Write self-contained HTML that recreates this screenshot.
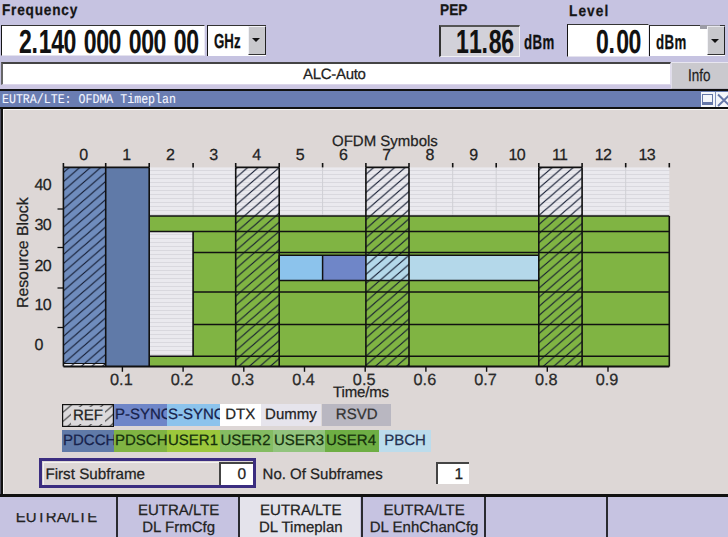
<!DOCTYPE html><html><head><meta charset="utf-8"><style>
html,body{margin:0;padding:0}
body{width:728px;height:537px;overflow:hidden;position:relative;background:#c6c3e1;font-family:"Liberation Sans",sans-serif;text-rendering:geometricPrecision;-webkit-text-stroke:0.25px}
div{box-sizing:border-box}
</style></head><body>
<div style="position:absolute;left:2.4px;top:3.30px;font-size:15.5px;line-height:15.5px;white-space:pre;color:#151515;font-weight:bold;letter-spacing:0.9px;transform:scaleX(0.88);transform-origin:0 0;">Frequency</div>
<div style="position:absolute;left:440.3px;top:3.30px;font-size:15.5px;line-height:15.5px;white-space:pre;color:#151515;font-weight:bold;letter-spacing:0.1px;transform:scaleX(0.88);transform-origin:0 0;">PEP</div>
<div style="position:absolute;left:568.6px;top:3.70px;font-size:15.5px;line-height:15.5px;white-space:pre;color:#151515;font-weight:bold;letter-spacing:1.25px;transform:scaleX(0.88);transform-origin:0 0;">Level</div>
<div style="position:absolute;left:0.8px;top:24.7px;width:204.5px;height:31.8px;background:#fff;border-left:1.8px solid #151515;border-top:1.7px solid #333;border-right:1px solid #eceaf4;border-bottom:1px solid #e4e2ee"></div>
<div style="position:absolute;left:19.12px;top:25.9px;font-size:33.3px;line-height:33.3px;font-weight:bold;color:#111;-webkit-text-stroke:0.1px;white-space:pre;letter-spacing:-0.6px;word-spacing:2.6px;transform:scaleX(0.692);transform-origin:0 0">2<span style="letter-spacing:1.4px">.</span>140 000 000 00</div>
<div style="position:absolute;left:206.7px;top:24.7px;width:59px;height:31.5px;background:#fff;border-left:1.6px solid #151515;border-top:1.6px solid #333"></div>
<div style="position:absolute;left:248px;top:26.3px;width:17.7px;height:29.2px;background:#c8c8cc;border-left:1px solid #f2f2f6;border-top:1px solid #f2f2f6;border-right:1.8px solid #222;border-bottom:1.8px solid #333"></div>
<div style="position:absolute;left:251.6px;top:38.2px;width:0;height:0;border-left:4.6px solid transparent;border-right:4.6px solid transparent;border-top:4.8px solid #111"></div>
<div style="position:absolute;left:213.7px;top:32px;font-size:20.4px;line-height:20.4px;font-weight:bold;color:#111;white-space:pre;transform:scaleX(0.65);transform-origin:0 0">GHz</div>
<div style="position:absolute;left:438.5px;top:24.5px;width:81px;height:32px;background:#d2d1d9;border-left:2px solid #333;border-top:2px solid #555;border-right:1px solid #f0f0f4;border-bottom:1px solid #f0f0f4"></div>
<div style="position:absolute;left:455.7px;top:25.8px;font-size:33.3px;line-height:33.3px;font-weight:bold;color:#111;-webkit-text-stroke:0.1px;white-space:pre;letter-spacing:-0.6px;transform:scaleX(0.692);transform-origin:0 0"><span style="letter-spacing:0.3px">1</span>1<span style="letter-spacing:1.4px">.</span>86</div>
<div style="position:absolute;left:523.8px;top:32.5px;font-size:20.4px;line-height:20.4px;font-weight:bold;color:#111;white-space:pre;letter-spacing:0.6px;transform:scaleX(0.65);transform-origin:0 0">dBm</div>
<div style="position:absolute;left:567px;top:24.3px;width:81.5px;height:32.3px;background:#fff;border-left:1.8px solid #151515;border-top:1.7px solid #333;border-right:1px solid #eceaf4;border-bottom:1px solid #e4e2ee"></div>
<div style="position:absolute;left:596.1px;top:26.1px;font-size:33.3px;line-height:33.3px;font-weight:bold;color:#111;-webkit-text-stroke:0.1px;white-space:pre;letter-spacing:-0.6px;transform:scaleX(0.692);transform-origin:0 0">0<span style="letter-spacing:2px">.</span>00</div>
<div style="position:absolute;left:649.1px;top:24.7px;width:76px;height:31px;background:#fff;border-left:1.6px solid #151515;border-top:1.7px solid #333"></div>
<div style="position:absolute;left:700px;top:25px;width:20px;height:3.5px;background:#9c9ca6"></div>
<div style="position:absolute;left:707.3px;top:26.4px;width:17.7px;height:28.9px;background:#c8c8cc;border-left:1px solid #f2f2f6;border-top:1px solid #e8e8ee;border-right:1.8px solid #222;border-bottom:1.8px solid #333"></div>
<div style="position:absolute;left:711.2px;top:39.4px;width:0;height:0;border-left:4.4px solid transparent;border-right:4.4px solid transparent;border-top:4.4px solid #111"></div>
<div style="position:absolute;left:656.3px;top:32.5px;font-size:20.4px;line-height:20.4px;font-weight:bold;color:#111;white-space:pre;letter-spacing:0.6px;transform:scaleX(0.65);transform-origin:0 0">dBm</div>
<div style="position:absolute;left:1px;top:61.5px;width:670px;height:23px;background:#fff;border-left:2px solid #666;border-top:2px solid #444;border-right:1.5px solid #e0dcec;border-bottom:1px solid #dcd6ea"></div>
<div style="position:absolute;left:0;top:84.5px;width:671px;height:4.3px;background:#cdc7e3"></div>
<div style="position:absolute;left:303px;top:66.58px;font-size:15px;line-height:15px;white-space:pre;color:#222;font-weight:normal;letter-spacing:-0.3px;">ALC-Auto</div>
<div style="position:absolute;left:671px;top:61.5px;width:57px;height:27.3px;background:#cac9ce;border-top:1px solid #e8e6f0;border-left:1px solid #e0deea;border-bottom:1.5px solid #b8b6c0"></div>
<div style="position:absolute;left:688.3px;top:67.06px;font-size:17px;line-height:17px;white-space:pre;color:#222;font-weight:normal;transform:scaleX(0.79);transform-origin:0 0;">Info</div>
<div style="position:absolute;left:0;top:88.8px;width:728px;height:1.9px;background:#111"></div>
<div style="position:absolute;left:0;top:90.7px;width:728px;height:16.7px;background:#6a7db2"></div>
<div style="position:absolute;left:2px;top:93.70px;font-size:11.6px;line-height:11.6px;white-space:pre;color:#f4f6ff;font-weight:normal;font-family:'Liberation Mono',monospace;transform:scaleY(1.15);transform-origin:0 0;-webkit-text-stroke:0.1px;">EUTRA/LTE: OFDMA Timeplan</div>
<div style="position:absolute;left:700.5px;top:91.5px;width:14px;height:15.5px;background:#f4f6fb"></div>
<div style="position:absolute;left:702.2px;top:93.8px;width:10.8px;height:11px;border:1.3px solid #6577a8;border-bottom:3px solid #6577a8"></div>
<div style="position:absolute;left:714.5px;top:91.5px;width:1.5px;height:15.5px;background:#8090bb"></div>
<div style="position:absolute;left:716px;top:91.5px;width:12px;height:15.5px;background:#f4f6fb"></div>
<svg style="position:absolute;left:716px;top:91.5px" width="12" height="16"><path d="M2,2.5 L14,14 M14,2.5 L2,14" stroke="#6577a8" stroke-width="2"/></svg>
<div style="position:absolute;left:0;top:107.4px;width:728px;height:1.4px;background:#111"></div>
<div style="position:absolute;left:0;top:109px;width:728px;height:385px;background:#ddd7d6"></div>
<div style="position:absolute;left:2.5px;top:108.8px;width:726px;height:1.3px;background:#f8f6f4"></div>
<div style="position:absolute;left:0;top:108.8px;width:1.4px;height:385px;background:#505060"></div>
<div style="position:absolute;left:1.4px;top:108.8px;width:1.2px;height:385px;background:#111"></div>
<div style="position:absolute;left:2.6px;top:108.8px;width:1.1px;height:385px;background:#f8f6f4"></div>
<svg width="728" height="537" style="position:absolute;left:0;top:0">
<defs>
<pattern id="gstripe" patternUnits="userSpaceOnUse" x="0" y="167" width="8" height="4"><rect width="8" height="4" fill="#eae9ee"/><rect y="3" width="8" height="1" fill="#d9d8de"/></pattern>
<pattern id="hatch" patternUnits="userSpaceOnUse" x="0" y="0" width="10.5" height="9.1"><path d="M-1.05,10.01 L11.55,-0.91 M-11.55,10.01 L1.05,-0.91 M9.45,10.01 L22.05,-0.91" stroke="#121a30" stroke-width="1.1" fill="none"/></pattern>
</defs>
<rect x="149.20" y="167.40" width="520.10" height="48.60" fill="url(#gstripe)"/>
<line x1="193.10" y1="167.40" x2="193.10" y2="216.00" stroke="#cfcfd4" stroke-width="1"/>
<line x1="235.70" y1="167.40" x2="235.70" y2="216.00" stroke="#cfcfd4" stroke-width="1"/>
<line x1="279.20" y1="167.40" x2="279.20" y2="216.00" stroke="#cfcfd4" stroke-width="1"/>
<line x1="322.60" y1="167.40" x2="322.60" y2="216.00" stroke="#cfcfd4" stroke-width="1"/>
<line x1="365.90" y1="167.40" x2="365.90" y2="216.00" stroke="#cfcfd4" stroke-width="1"/>
<line x1="409.00" y1="167.40" x2="409.00" y2="216.00" stroke="#cfcfd4" stroke-width="1"/>
<line x1="452.70" y1="167.40" x2="452.70" y2="216.00" stroke="#cfcfd4" stroke-width="1"/>
<line x1="496.20" y1="167.40" x2="496.20" y2="216.00" stroke="#cfcfd4" stroke-width="1"/>
<line x1="538.80" y1="167.40" x2="538.80" y2="216.00" stroke="#cfcfd4" stroke-width="1"/>
<line x1="582.10" y1="167.40" x2="582.10" y2="216.00" stroke="#cfcfd4" stroke-width="1"/>
<line x1="625.70" y1="167.40" x2="625.70" y2="216.00" stroke="#cfcfd4" stroke-width="1"/>
<rect x="149.20" y="216.00" width="520.10" height="150.50" fill="#80b443"/>
<rect x="149.20" y="231.50" width="43.90" height="124.70" fill="url(#gstripe)"/>
<rect x="279.20" y="255.30" width="43.40" height="25.20" fill="#8cc3ec"/>
<rect x="322.60" y="255.30" width="43.30" height="25.20" fill="#6f86c8"/>
<rect x="365.90" y="255.30" width="172.90" height="25.20" fill="#b4d8ea"/>
<rect x="63.40" y="167.40" width="42.30" height="199.10" fill="#6f8cbd"/>
<rect x="105.70" y="167.40" width="43.50" height="199.10" fill="#607aa8"/>
<rect x="63.40" y="363.50" width="42.30" height="3.00" fill="#f0f0f4"/>
<rect x="63.40" y="167.4" width="42.30" height="199.10" fill="url(#hatch)"/>
<rect x="235.70" y="167.4" width="43.50" height="199.10" fill="url(#hatch)"/>
<rect x="365.90" y="167.4" width="43.10" height="199.10" fill="url(#hatch)"/>
<rect x="538.80" y="167.4" width="43.30" height="199.10" fill="url(#hatch)"/>
<line x1="149.20" y1="216.00" x2="669.30" y2="216.00" stroke="#111" stroke-width="1.6"/>
<line x1="149.20" y1="231.50" x2="669.30" y2="231.50" stroke="#111" stroke-width="1.6"/>
<line x1="193.10" y1="252.50" x2="669.30" y2="252.50" stroke="#111" stroke-width="1.3"/>
<line x1="279.20" y1="255.30" x2="538.80" y2="255.30" stroke="#111" stroke-width="1.6"/>
<line x1="279.20" y1="280.50" x2="538.80" y2="280.50" stroke="#111" stroke-width="1.6"/>
<line x1="193.10" y1="292.00" x2="669.30" y2="292.00" stroke="#111" stroke-width="1.6"/>
<line x1="193.10" y1="324.50" x2="669.30" y2="324.50" stroke="#111" stroke-width="1.6"/>
<line x1="149.20" y1="356.20" x2="669.30" y2="356.20" stroke="#111" stroke-width="1.6"/>
<line x1="63.40" y1="366.50" x2="669.30" y2="366.50" stroke="#111" stroke-width="1.8"/>
<line x1="63.40" y1="167.40" x2="149.20" y2="167.40" stroke="#111" stroke-width="1.6"/>
<line x1="235.70" y1="167.40" x2="279.20" y2="167.40" stroke="#111" stroke-width="1.6"/>
<line x1="365.90" y1="167.40" x2="409.00" y2="167.40" stroke="#111" stroke-width="1.6"/>
<line x1="538.80" y1="167.40" x2="582.10" y2="167.40" stroke="#111" stroke-width="1.6"/>
<line x1="63.40" y1="363.50" x2="105.70" y2="363.50" stroke="#111" stroke-width="1.0"/>
<line x1="63.40" y1="167.40" x2="63.40" y2="366.50" stroke="#111" stroke-width="1.6"/>
<line x1="105.70" y1="167.40" x2="105.70" y2="366.50" stroke="#111" stroke-width="1.6"/>
<line x1="149.20" y1="167.40" x2="149.20" y2="366.50" stroke="#111" stroke-width="1.6"/>
<line x1="235.70" y1="167.40" x2="235.70" y2="366.50" stroke="#111" stroke-width="1.6"/>
<line x1="279.20" y1="167.40" x2="279.20" y2="366.50" stroke="#111" stroke-width="1.6"/>
<line x1="365.90" y1="167.40" x2="365.90" y2="366.50" stroke="#111" stroke-width="1.6"/>
<line x1="409.00" y1="167.40" x2="409.00" y2="366.50" stroke="#111" stroke-width="1.6"/>
<line x1="538.80" y1="167.40" x2="538.80" y2="366.50" stroke="#111" stroke-width="1.6"/>
<line x1="582.10" y1="167.40" x2="582.10" y2="366.50" stroke="#111" stroke-width="1.6"/>
<line x1="669.30" y1="216.00" x2="669.30" y2="366.50" stroke="#111" stroke-width="1.6"/>
<line x1="279.20" y1="255.30" x2="279.20" y2="280.50" stroke="#111" stroke-width="1.5"/>
<line x1="322.60" y1="255.30" x2="322.60" y2="280.50" stroke="#111" stroke-width="1.5"/>
<line x1="193.10" y1="231.50" x2="193.10" y2="356.20" stroke="#111" stroke-width="1.6"/>
<line x1="63.40" y1="163.00" x2="63.40" y2="167.40" stroke="#111" stroke-width="1.6"/>
<line x1="105.70" y1="163.00" x2="105.70" y2="167.40" stroke="#111" stroke-width="1.6"/>
<line x1="149.20" y1="163.00" x2="149.20" y2="167.40" stroke="#111" stroke-width="1.6"/>
<line x1="193.10" y1="163.00" x2="193.10" y2="167.40" stroke="#111" stroke-width="1.6"/>
<line x1="235.70" y1="163.00" x2="235.70" y2="167.40" stroke="#111" stroke-width="1.6"/>
<line x1="279.20" y1="163.00" x2="279.20" y2="167.40" stroke="#111" stroke-width="1.6"/>
<line x1="322.60" y1="163.00" x2="322.60" y2="167.40" stroke="#111" stroke-width="1.6"/>
<line x1="365.90" y1="163.00" x2="365.90" y2="167.40" stroke="#111" stroke-width="1.6"/>
<line x1="409.00" y1="163.00" x2="409.00" y2="167.40" stroke="#111" stroke-width="1.6"/>
<line x1="452.70" y1="163.00" x2="452.70" y2="167.40" stroke="#111" stroke-width="1.6"/>
<line x1="496.20" y1="163.00" x2="496.20" y2="167.40" stroke="#111" stroke-width="1.6"/>
<line x1="538.80" y1="163.00" x2="538.80" y2="167.40" stroke="#111" stroke-width="1.6"/>
<line x1="582.10" y1="163.00" x2="582.10" y2="167.40" stroke="#111" stroke-width="1.6"/>
<line x1="625.70" y1="163.00" x2="625.70" y2="167.40" stroke="#111" stroke-width="1.6"/>
<line x1="669.30" y1="163.00" x2="669.30" y2="167.40" stroke="#111" stroke-width="1.6"/>
<line x1="57.50" y1="209.00" x2="63.40" y2="209.00" stroke="#111" stroke-width="1.3"/>
<line x1="57.50" y1="247.50" x2="63.40" y2="247.50" stroke="#111" stroke-width="1.3"/>
<line x1="57.50" y1="288.00" x2="63.40" y2="288.00" stroke="#111" stroke-width="1.3"/>
<line x1="57.50" y1="327.50" x2="63.40" y2="327.50" stroke="#111" stroke-width="1.3"/>
<line x1="122.40" y1="366.50" x2="122.40" y2="371.80" stroke="#111" stroke-width="1.4"/>
<line x1="183.10" y1="366.50" x2="183.10" y2="371.80" stroke="#111" stroke-width="1.4"/>
<line x1="243.80" y1="366.50" x2="243.80" y2="371.80" stroke="#111" stroke-width="1.4"/>
<line x1="304.50" y1="366.50" x2="304.50" y2="371.80" stroke="#111" stroke-width="1.4"/>
<line x1="365.20" y1="366.50" x2="365.20" y2="371.80" stroke="#111" stroke-width="1.4"/>
<line x1="425.90" y1="366.50" x2="425.90" y2="371.80" stroke="#111" stroke-width="1.4"/>
<line x1="486.60" y1="366.50" x2="486.60" y2="371.80" stroke="#111" stroke-width="1.4"/>
<line x1="547.30" y1="366.50" x2="547.30" y2="371.80" stroke="#111" stroke-width="1.4"/>
<line x1="608.00" y1="366.50" x2="608.00" y2="371.80" stroke="#111" stroke-width="1.4"/>
</svg>
<div style="position:absolute;left:63.75px;top:147.82px;font-size:16px;line-height:16px;white-space:pre;color:#222;font-weight:normal;width:40px;text-align:center;">0</div>
<div style="position:absolute;left:106.64999999999999px;top:147.82px;font-size:16px;line-height:16px;white-space:pre;color:#222;font-weight:normal;width:40px;text-align:center;">1</div>
<div style="position:absolute;left:150.34999999999997px;top:147.82px;font-size:16px;line-height:16px;white-space:pre;color:#222;font-weight:normal;width:40px;text-align:center;">2</div>
<div style="position:absolute;left:193.59999999999997px;top:147.82px;font-size:16px;line-height:16px;white-space:pre;color:#222;font-weight:normal;width:40px;text-align:center;">3</div>
<div style="position:absolute;left:236.64999999999998px;top:147.82px;font-size:16px;line-height:16px;white-space:pre;color:#222;font-weight:normal;width:40px;text-align:center;">4</div>
<div style="position:absolute;left:280.09999999999997px;top:147.82px;font-size:16px;line-height:16px;white-space:pre;color:#222;font-weight:normal;width:40px;text-align:center;">5</div>
<div style="position:absolute;left:323.45px;top:147.82px;font-size:16px;line-height:16px;white-space:pre;color:#222;font-weight:normal;width:40px;text-align:center;">6</div>
<div style="position:absolute;left:366.65px;top:147.82px;font-size:16px;line-height:16px;white-space:pre;color:#222;font-weight:normal;width:40px;text-align:center;">7</div>
<div style="position:absolute;left:410.05px;top:147.82px;font-size:16px;line-height:16px;white-space:pre;color:#222;font-weight:normal;width:40px;text-align:center;">8</div>
<div style="position:absolute;left:453.65px;top:147.82px;font-size:16px;line-height:16px;white-space:pre;color:#222;font-weight:normal;width:40px;text-align:center;">9</div>
<div style="position:absolute;left:496.70000000000005px;top:147.82px;font-size:16px;line-height:16px;white-space:pre;color:#222;font-weight:normal;width:40px;text-align:center;letter-spacing:-0.6px;">10</div>
<div style="position:absolute;left:539.6500000000001px;top:147.82px;font-size:16px;line-height:16px;white-space:pre;color:#222;font-weight:normal;width:40px;text-align:center;letter-spacing:-0.6px;">11</div>
<div style="position:absolute;left:583.1000000000001px;top:147.82px;font-size:16px;line-height:16px;white-space:pre;color:#222;font-weight:normal;width:40px;text-align:center;letter-spacing:-0.6px;">12</div>
<div style="position:absolute;left:626.7px;top:147.82px;font-size:16px;line-height:16px;white-space:pre;color:#222;font-weight:normal;width:40px;text-align:center;letter-spacing:-0.6px;">13</div>
<div style="position:absolute;left:332px;top:133.78px;font-size:15px;line-height:15px;white-space:pre;color:#222;font-weight:normal;">OFDM Symbols</div>
<div style="position:absolute;left:34.6px;top:178.02px;font-size:16px;line-height:16px;white-space:pre;color:#222;font-weight:normal;letter-spacing:-0.8px;">40</div>
<div style="position:absolute;left:34.6px;top:218.32px;font-size:16px;line-height:16px;white-space:pre;color:#222;font-weight:normal;letter-spacing:-0.8px;">30</div>
<div style="position:absolute;left:34.6px;top:258.72px;font-size:16px;line-height:16px;white-space:pre;color:#222;font-weight:normal;letter-spacing:-0.8px;">20</div>
<div style="position:absolute;left:34.6px;top:298.32px;font-size:16px;line-height:16px;white-space:pre;color:#222;font-weight:normal;letter-spacing:-0.8px;">10</div>
<div style="position:absolute;left:34.6px;top:337.82px;font-size:16px;line-height:16px;white-space:pre;color:#222;font-weight:normal;letter-spacing:-0.8px;">0</div>
<div style="position:absolute;left:101.4px;top:371.97px;font-size:16.3px;line-height:16.3px;white-space:pre;color:#2a2a2a;font-weight:normal;width:40px;text-align:center;">0.1</div>
<div style="position:absolute;left:162.10000000000002px;top:371.97px;font-size:16.3px;line-height:16.3px;white-space:pre;color:#2a2a2a;font-weight:normal;width:40px;text-align:center;">0.2</div>
<div style="position:absolute;left:222.8px;top:371.97px;font-size:16.3px;line-height:16.3px;white-space:pre;color:#2a2a2a;font-weight:normal;width:40px;text-align:center;">0.3</div>
<div style="position:absolute;left:283.5px;top:371.97px;font-size:16.3px;line-height:16.3px;white-space:pre;color:#2a2a2a;font-weight:normal;width:40px;text-align:center;">0.4</div>
<div style="position:absolute;left:344.2px;top:371.97px;font-size:16.3px;line-height:16.3px;white-space:pre;color:#2a2a2a;font-weight:normal;width:40px;text-align:center;">0.5</div>
<div style="position:absolute;left:404.90000000000003px;top:371.97px;font-size:16.3px;line-height:16.3px;white-space:pre;color:#2a2a2a;font-weight:normal;width:40px;text-align:center;">0.6</div>
<div style="position:absolute;left:465.6px;top:371.97px;font-size:16.3px;line-height:16.3px;white-space:pre;color:#2a2a2a;font-weight:normal;width:40px;text-align:center;">0.7</div>
<div style="position:absolute;left:526.3000000000001px;top:371.97px;font-size:16.3px;line-height:16.3px;white-space:pre;color:#2a2a2a;font-weight:normal;width:40px;text-align:center;">0.8</div>
<div style="position:absolute;left:587.0000000000001px;top:371.97px;font-size:16.3px;line-height:16.3px;white-space:pre;color:#2a2a2a;font-weight:normal;width:40px;text-align:center;">0.9</div>
<div style="position:absolute;left:333px;top:385.37px;font-size:15px;line-height:15px;white-space:pre;color:#222;font-weight:normal;letter-spacing:-0.15px;">Time/ms</div>
<div style="position:absolute;left:15.8px;top:308px;width:0;height:0"><div style="position:absolute;left:0;top:0;transform:rotate(-90deg);transform-origin:0 0;font-size:15.8px;line-height:15.8px;white-space:pre;color:#222">Resource Block</div></div>
<svg style="position:absolute;left:62px;top:403.5px" width="52" height="23"><defs><pattern id="hatch2" patternUnits="userSpaceOnUse" width="10.5" height="9.1"><path d="M-1.05,10.01 L11.55,-0.91 M-11.55,10.01 L1.05,-0.91 M9.45,10.01 L22.05,-0.91" stroke="#333" stroke-width="1" fill="none"/></pattern></defs><rect x="0" y="0" width="52" height="23" fill="#dcdadc"/><rect x="0" y="0" width="52" height="23" fill="url(#hatch2)"/><rect x="0.6" y="0.6" width="50.8" height="21.8" fill="none" stroke="#111" stroke-width="1.2"/></svg>
<div style="position:absolute;left:62px;top:403.5px;width:52px;height:23px;font-size:14px;line-height:23px;text-align:center;color:#222"><span style="background:#dcdadc;padding:0 2px;font-size:15px">REF</span></div>
<div style="position:absolute;left:114px;top:403.6px;width:53px;height:22.0px;background:#6f86c8;font-size:15px;line-height:22.0px;text-align:left;padding-left:1px;white-space:pre;overflow:hidden;color:#17224c">P-SYNC</div>
<div style="position:absolute;left:167px;top:403.6px;width:52.5px;height:22.0px;background:#8cc3ec;font-size:15px;line-height:22.0px;text-align:left;padding-left:1px;white-space:pre;overflow:hidden;color:#17224c">S-SYNC</div>
<div style="position:absolute;left:219.7px;top:403.6px;width:41.10000000000002px;height:22.0px;background:#ffffff;font-size:15px;line-height:22.0px;text-align:center;white-space:pre;overflow:hidden;color:#222">DTX</div>
<div style="position:absolute;left:260.8px;top:403.6px;width:60.19999999999999px;height:22.0px;background:#e6e4ec;font-size:15px;line-height:22.0px;text-align:center;white-space:pre;overflow:hidden;color:#222">Dummy</div>
<div style="position:absolute;left:322.4px;top:403.6px;width:68.60000000000002px;height:22.0px;background:#b9b7c1;font-size:15px;line-height:22.0px;text-align:center;white-space:pre;overflow:hidden;color:#333">RSVD</div>
<div style="position:absolute;left:62px;top:429.7px;width:52px;height:22.19999999999999px;background:#607aa8;font-size:15px;line-height:22.19999999999999px;text-align:left;padding-left:1px;white-space:pre;overflow:hidden;color:#17224c">PDCCH</div>
<div style="position:absolute;left:114px;top:429.7px;width:53px;height:22.19999999999999px;background:#80b443;font-size:15px;line-height:22.19999999999999px;text-align:left;padding-left:1px;white-space:pre;overflow:hidden;color:#15300c">PDSCH</div>
<div style="position:absolute;left:167px;top:429.7px;width:52.5px;height:22.19999999999999px;background:#9cc83c;font-size:15px;line-height:22.19999999999999px;text-align:left;padding-left:1px;white-space:pre;overflow:hidden;color:#15300c">USER1</div>
<div style="position:absolute;left:219.5px;top:429.7px;width:53.5px;height:22.19999999999999px;background:#84bc62;font-size:15px;line-height:22.19999999999999px;text-align:left;padding-left:1px;white-space:pre;overflow:hidden;color:#15300c">USER2</div>
<div style="position:absolute;left:273px;top:429.7px;width:52px;height:22.19999999999999px;background:#92c47e;font-size:15px;line-height:22.19999999999999px;text-align:left;padding-left:1px;white-space:pre;overflow:hidden;color:#15300c">USER3</div>
<div style="position:absolute;left:325px;top:429.7px;width:54px;height:22.19999999999999px;background:#6eae44;font-size:15px;line-height:22.19999999999999px;text-align:left;padding-left:1px;white-space:pre;overflow:hidden;color:#15300c">USER4</div>
<div style="position:absolute;left:379px;top:429.7px;width:52px;height:22.19999999999999px;background:#bcdcec;font-size:15px;line-height:22.19999999999999px;text-align:center;white-space:pre;overflow:hidden;color:#253050">PBCH</div>
<div style="position:absolute;left:39.3px;top:457.7px;width:216.7px;height:30.8px;border:3.8px solid #3b2d80"></div>
<div style="position:absolute;left:43.1px;top:461.5px;width:209.1px;height:23.2px;border-top:1px solid #f4f2f0;border-left:1px solid #f4f2f0"></div>
<div style="position:absolute;left:45.4px;top:467.14px;font-size:15.2px;line-height:15.2px;white-space:pre;color:#222;font-weight:normal;">First Subframe</div>
<div style="position:absolute;left:219.2px;top:461.5px;width:33.5px;height:23.5px;background:#fff;border-left:2px solid #444;border-top:2px solid #444"></div>
<div style="position:absolute;left:221px;top:467.30px;font-size:15.5px;line-height:15.5px;white-space:pre;color:#222;font-weight:normal;width:25px;text-align:right;">0</div>
<div style="position:absolute;left:262.6px;top:467.37px;font-size:15px;line-height:15px;white-space:pre;color:#222;font-weight:normal;">No. Of Subframes</div>
<div style="position:absolute;left:435.6px;top:461.7px;width:33px;height:22px;background:#fff;border-left:2px solid #444;border-top:2px solid #444"></div>
<div style="position:absolute;left:437px;top:467.30px;font-size:15.5px;line-height:15.5px;white-space:pre;color:#222;font-weight:normal;width:26px;text-align:right;">1</div>
<div style="position:absolute;left:0;top:493.5px;width:728px;height:3px;background:#111"></div>
<div style="position:absolute;left:0px;top:496.5px;width:116px;height:41px;background:#c6c3e1"></div>
<div style="position:absolute;left:0px;top:513.2px;width:116px;height:21px;overflow:hidden"><div style="position:absolute;left:-1.5px;top:-2.82px;font-size:15px;line-height:15px;white-space:pre;color:#222;font-weight:normal;width:116px;text-align:center;">EUTRA/LTE</div></div>
<div style="position:absolute;left:118px;top:496.5px;width:120.30000000000001px;height:41px;background:#c6c3e1"></div>
<div style="position:absolute;left:116px;top:496.5px;width:2px;height:41px;background:#2a2a30"></div>
<div style="position:absolute;left:118.5px;top:502.67px;font-size:15px;line-height:15px;white-space:pre;color:#222;font-weight:normal;width:120.30000000000001px;text-align:center;">EUTRA/LTE</div>
<div style="position:absolute;left:118.5px;top:520.17px;font-size:15px;line-height:15px;white-space:pre;color:#222;font-weight:normal;width:120.30000000000001px;text-align:center;">DL FrmCfg</div>
<div style="position:absolute;left:240.3px;top:496.5px;width:120.0px;height:41px;background:#e4e3eb"></div>
<div style="position:absolute;left:238.3px;top:496.5px;width:2px;height:41px;background:#2a2a30"></div>
<div style="position:absolute;left:240.8px;top:502.67px;font-size:15px;line-height:15px;white-space:pre;color:#222;font-weight:normal;width:120.0px;text-align:center;">EUTRA/LTE</div>
<div style="position:absolute;left:240.8px;top:520.17px;font-size:15px;line-height:15px;white-space:pre;color:#222;font-weight:normal;width:120.0px;text-align:center;">DL Timeplan</div>
<div style="position:absolute;left:363px;top:496.5px;width:121.19999999999999px;height:41px;background:#c6c3e1"></div>
<div style="position:absolute;left:361px;top:496.5px;width:2px;height:41px;background:#2a2a30"></div>
<div style="position:absolute;left:363.5px;top:502.67px;font-size:15px;line-height:15px;white-space:pre;color:#222;font-weight:normal;width:121.19999999999999px;text-align:center;">EUTRA/LTE</div>
<div style="position:absolute;left:363.5px;top:520.17px;font-size:15px;line-height:15px;white-space:pre;color:#222;font-weight:normal;width:121.19999999999999px;text-align:center;">DL EnhChanCfg</div>
<div style="position:absolute;left:486px;top:496.5px;width:119.79999999999995px;height:41px;background:#c6c3e1"></div>
<div style="position:absolute;left:484px;top:496.5px;width:2px;height:41px;background:#2a2a30"></div>
<div style="position:absolute;left:607.8px;top:496.5px;width:120.20000000000005px;height:41px;background:#c6c3e1"></div>
<div style="position:absolute;left:605.8px;top:496.5px;width:2px;height:41px;background:#2a2a30"></div>
</body></html>
